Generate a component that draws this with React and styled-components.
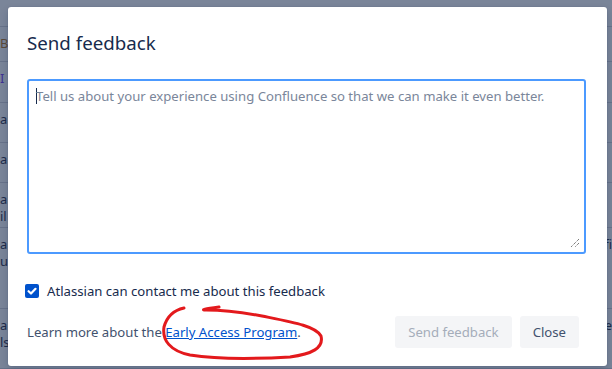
import React from 'react'
import styled, { createGlobalStyle } from 'styled-components'

const GlobalStyle = createGlobalStyle`
  html, body {
    margin: 0;
    padding: 0;
    width: 612px;
    height: 369px;
    overflow: hidden;
    font-family: 'Noto Sans', 'Open Sans', sans-serif;
  }
`

const Screen = styled.div`
  position: relative;
  width: 612px;
  height: 369px;
  overflow: hidden;
  background: #7a8599;
`

const BackPage = styled.div`
  display: flex;
  flex-direction: column;
  width: 100%;
`

const BackRow = styled.div`
  display: flex;
  justify-content: space-between;
  align-items: flex-start;
  height: ${(p) => p.h}px;
  border-bottom: 1px solid #68738a;
  box-sizing: border-box;
  padding-top: 8px;
  font-size: 13px;
  line-height: 17px;
`

const BackCell = styled.div`
  display: flex;
  flex-direction: column;
  color: ${(p) => p.color || '#1d2b4a'};
`

const Modal = styled.div`
  position: absolute;
  left: 8px;
  top: 7px;
  width: 599px;
  height: 359px;
  background: #fff;
  border-radius: 3px;
  box-shadow: 0 0 1px rgba(9, 30, 66, 0.3), 0 4px 8px rgba(9, 30, 66, 0.2);
  display: flex;
  flex-direction: column;
  padding: 0 21px 0 19px;
  box-sizing: border-box;
  color: #172b4d;
  font-size: 13.15px;
`

const Title = styled.h2`
  margin: 23px 0 0;
  font-size: 18.7px;
  font-weight: 400;
  line-height: 26px;
  color: #172b4d;
`

const TextArea = styled.div`
  position: relative;
  margin-top: 23px;
  height: 175px;
  border: 2px solid #4c9aff;
  border-radius: 3px;
  box-sizing: border-box;
  padding: 5px 7px;
`

const Placeholder = styled.div`
  display: flex;
  align-items: center;
  line-height: 20px;
  color: #7a869a;
`

const Caret = styled.span`
  display: inline-block;
  width: 1px;
  height: 16px;
  background: #172b4d;
  margin-right: -1px;
`

const Grip = styled.svg`
  position: absolute;
  right: 4px;
  bottom: 4px;
`

const CheckRow = styled.label`
  display: flex;
  align-items: center;
  gap: 8px;
  margin-top: 27px;
  margin-left: -2px;
  line-height: 20px;
  color: #172b4d;
`

const Box = styled.span`
  width: 14px;
  height: 14px;
  border-radius: 2px;
  background: #0052cc;
  display: flex;
  align-items: center;
  justify-content: center;
`

const Footer = styled.div`
  display: flex;
  align-items: center;
  justify-content: space-between;
  margin-top: 15px;
`

const Learn = styled.div`
  line-height: 20px;
  color: #42526e;
`

const Link = styled.a`
  color: #0052cc;
  text-decoration: underline;
`

const Buttons = styled.div`
  display: flex;
  gap: 8px;
  margin-right: 7px;
`

const Button = styled.button`
  height: 32px;
  padding: 0 13px;
  border: none;
  border-radius: 3px;
  background: #f4f5f7;
  font-family: inherit;
  font-size: 13.15px;
  color: ${(p) => (p.disabled ? '#a5adba' : '#42526e')};
  cursor: ${(p) => (p.disabled ? 'not-allowed' : 'pointer')};
`

const Scribble = styled.svg`
  position: absolute;
  left: 0;
  top: 0;
  pointer-events: none;
`

const rows = [
  { h: 27, l: [], r: [] },
  { h: 35, l: ['B'], lc: '#5a4a3a', r: [] },
  { h: 41, l: ['I'], lc: '#403294', r: [] },
  { h: 40, l: ['a'], r: [] },
  { h: 40, l: ['a'], r: [] },
  { h: 45, l: ['a', 'il'], r: [] },
  { h: 81, l: ['a', 'u'], r: ['fi'] },
  { h: 60, l: ['a', 'ls'], r: ['e'] },
]

export default function App() {
  return (
    <Screen>
      <GlobalStyle />
      <BackPage>
        {rows.map((row, i) => (
          <BackRow key={i} h={row.h}>
            <BackCell color={row.lc}>
              {row.l.map((t) => (
                <span key={t}>{t}</span>
              ))}
            </BackCell>
            <BackCell>
              {row.r.map((t) => (
                <span key={t}>{t}</span>
              ))}
            </BackCell>
          </BackRow>
        ))}
      </BackPage>

      <Modal>
        <Title>Send feedback</Title>
        <TextArea>
          <Placeholder>
            <Caret />
            Tell us about your experience using Confluence so that we can make it even better.
          </Placeholder>
          <Grip width="10" height="10" viewBox="0 0 10 10">
            <path d="M9 1 L1 9 M9 5 L5 9" stroke="#444" strokeWidth="1" strokeDasharray="1 1" />
          </Grip>
        </TextArea>
        <CheckRow>
          <Box>
            <svg width="10" height="10" viewBox="0 0 10 10">
              <path d="M1.6 5.2 L4 7.5 L8.5 2.8" fill="none" stroke="#fff" strokeWidth="2.2" strokeLinecap="round" strokeLinejoin="round" />
            </svg>
          </Box>
          Atlassian can contact me about this feedback
        </CheckRow>
        <Footer>
          <Learn>
            Learn more about the <Link href="#">Early Access Program</Link>.
          </Learn>
          <Buttons>
            <Button disabled>Send feedback</Button>
            <Button>Close</Button>
          </Buttons>
        </Footer>
      </Modal>

      <Scribble width="612" height="369" viewBox="0 0 612 369">
        <path
          d="M219 307 C205 309 200 310 206 310 C214 310 235 311 262 316 C292 322 316 326 321 336 C324 348 312 354 290 357 C255 359 215 359 190 355 C170 351 162 340 164 327 C167 316 175 310 184 308"
          fill="none"
          stroke="#e3191c"
          strokeWidth="3"
          strokeLinecap="round"
          strokeLinejoin="round"
        />
      </Scribble>
    </Screen>
  )
}
